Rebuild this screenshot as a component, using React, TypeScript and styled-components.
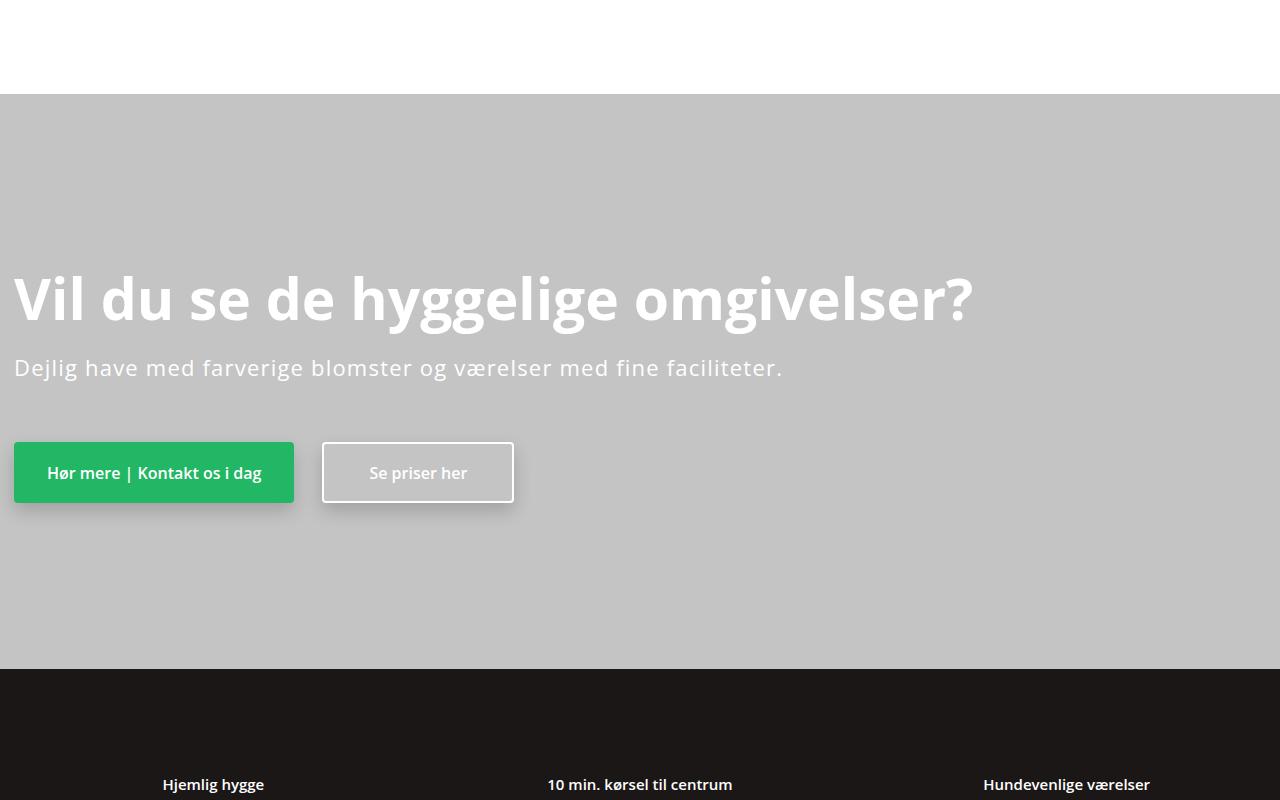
import React from "react";
import styled, { createGlobalStyle } from "styled-components";

const GlobalStyle = createGlobalStyle`
  body {
    margin: 0;
    padding: 0;
    font-family: "Open Sans", "Noto Sans", sans-serif;
    background: #ffffff;
  }
  * { box-sizing: border-box; }
`;

const Header = styled.header`
  height: 94px;
  background: #ffffff;
`;

const Hero = styled.section`
  height: 575px;
  background: #c4c4c4;
  display: flex;
  flex-direction: column;
  align-items: flex-start;
  padding: 170px 14px 0;
  color: #ffffff;
`;

const Title = styled.h1`
  margin: 0;
  font-size: 57px;
  font-weight: 700;
  line-height: 1.2;
`;

const Subtitle = styled.p`
  margin: 20px 0 0;
  font-size: 22px;
  font-weight: 400;
  line-height: 1.4;
  letter-spacing: 1.2px;
`;

const Actions = styled.div`
  display: flex;
  gap: 28px;
  margin-top: 59px;
`;

const Button = styled.a<{ $outline?: boolean }>`
  display: flex;
  align-items: center;
  justify-content: center;
  height: 61px;
  padding: 0 ${(p) => (p.$outline ? "45px" : "33px")};
  border-radius: 4px;
  font-size: 16px;
  font-weight: 600;
  color: #ffffff;
  text-decoration: none;
  background: ${(p) => (p.$outline ? "transparent" : "#22b764")};
  border: ${(p) => (p.$outline ? "2px solid #ffffff" : "none")};
  box-shadow: 0 8px 18px rgba(0, 0, 0, 0.18);
`;

const Features = styled.section`
  height: 131px;
  background: #1b1716;
  display: grid;
  grid-template-columns: repeat(3, 1fr);
  align-items: end;
  padding-bottom: 6px;
`;

const Feature = styled.div`
  text-align: center;
  color: #ffffff;
  font-size: 15px;
  font-weight: 600;
`;

const App: React.FC = () => {
  return (
    <>
      <GlobalStyle />
      <Header />
      <Hero>
        <Title>Vil du se de hyggelige omgivelser?</Title>
        <Subtitle>
          Dejlig have med farverige blomster og værelser med fine faciliteter.
        </Subtitle>
        <Actions>
          <Button href="#">Hør mere | Kontakt os i dag</Button>
          <Button href="#" $outline>
            Se priser her
          </Button>
        </Actions>
      </Hero>
      <Features>
        <Feature>Hjemlig hygge</Feature>
        <Feature>10 min. kørsel til centrum</Feature>
        <Feature>Hundevenlige værelser</Feature>
      </Features>
    </>
  );
};

export default App;
